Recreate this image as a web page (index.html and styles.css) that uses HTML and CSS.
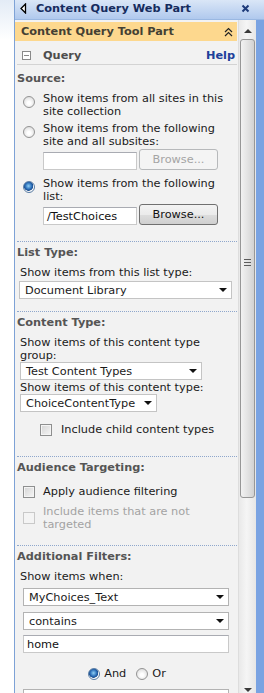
FILE: index.html
```html
<!DOCTYPE html>
<html lang="en">
<head>
    <meta charset="UTF-8">
    <meta name="viewport" content="width=device-width, initial-scale=1.0">
    <title>Content Query Web Part</title>
    <link rel="stylesheet" href="styles.css">
</head>
<body>
<div class="marco">
    <div class="barra-titulo">
        <svg class="flecha" width="7" height="11" viewBox="0 0 7 11">
            <polygon points="5.5,1 1,5.5 5.5,10" fill="#ffffff" stroke="#000000" stroke-width="1.3"/>
        </svg>
        <span class="titulo">Content Query Web Part</span>
        <svg class="cerrar" width="9" height="9" viewBox="0 0 9 9">
            <path d="M1.5 1.5 L7.5 7.5 M7.5 1.5 L1.5 7.5" stroke="#1d3a7a" stroke-width="2"/>
        </svg>
    </div>

    <div class="cuerpo">
        <div class="contenido">
            <div class="cabecera">
                <span>Content Query Tool Part</span>
                <svg width="9" height="10" viewBox="0 0 9 10">
                    <path d="M1 5 L4.5 1.5 L8 5 M1 9 L4.5 5.5 L8 9" fill="none" stroke="#222222" stroke-width="1.2"/>
                </svg>
            </div>

            <div class="fila-query">
                <span class="menos"></span>
                <span class="query">Query</span>
                <a class="ayuda">Help</a>
            </div>

            <!-- Origen -->
            <div class="etiqueta m7">Source:</div>
            <div class="opcion m7">
                <span class="radio"></span>
                <span class="texto">Show items from all sites in this site collection</span>
            </div>
            <div class="opcion m4">
                <span class="radio"></span>
                <span class="texto">Show items from the following site and all subsites:</span>
            </div>
            <div class="fila-examinar">
                <span class="caja"></span>
                <span class="boton deshabilitado">Browse...</span>
            </div>
            <div class="opcion m7">
                <span class="radio marcado"></span>
                <span class="texto">Show items from the following list:</span>
            </div>
            <div class="fila-examinar">
                <span class="caja">/TestChoices</span>
                <span class="boton">Browse...</span>
            </div>

            <!-- Tipo de lista -->
            <div class="seccion sep16">
                <div class="etiqueta m4">List Type:</div>
                <div class="texto-campo m7">Show items from this list type:</div>
                <div class="lista lista-tipo m2"><span>Document Library</span><i class="triangulo"></i></div>
            </div>

            <!-- Tipo de contenido -->
            <div class="seccion sep12">
                <div class="etiqueta m4">Content Type:</div>
                <div class="texto-campo m7">Show items of this content type group:</div>
                <div class="lista lista-grupo"><span>Test Content Types</span><i class="triangulo"></i></div>
                <div class="texto-campo corto m2">Show items of this content type:</div>
                <div class="lista lista-ct"><span>ChoiceContentType</span><i class="triangulo"></i></div>
                <div class="fila-check hijo m11">
                    <span class="check"></span>
                    <span>Include child content types</span>
                </div>
            </div>

            <!-- Audiencia -->
            <div class="seccion sep20">
                <div class="etiqueta m4">Audience Targeting:</div>
                <div class="fila-check m11">
                    <span class="check"></span>
                    <span>Apply audience filtering</span>
                </div>
                <div class="fila-check inactivo m7">
                    <span class="check"></span>
                    <span class="texto">Include items that are not targeted</span>
                </div>
            </div>

            <!-- Filtros -->
            <div class="seccion sep14">
                <div class="etiqueta m4">Additional Filters:</div>
                <div class="texto-campo m7">Show items when:</div>
                <div class="lista lista-filtro m5"><span>MyChoices_Text</span><i class="triangulo"></i></div>
                <div class="lista lista-filtro m6"><span>contains</span><i class="triangulo"></i></div>
                <div class="caja caja-filtro m5">home</div>
                <div class="fila-y-o">
                    <span class="radio marcado"></span>
                    <span class="y">And</span>
                    <span class="radio"></span>
                    <span>Or</span>
                </div>
                <div class="lista lista-filtro m9"><span></span><i class="triangulo"></i></div>
            </div>
        </div>

        <div class="scroll">
            <div class="scroll-arriba"><i class="tri-arriba"></i></div>
            <div class="pulgar"><span class="agarre"></span></div>
            <div class="scroll-resto"></div>
            <div class="scroll-abajo"><i class="triangulo"></i></div>
        </div>
        <div class="borde"></div>
    </div>
</div>
</body>
</html>
```

FILE: styles.css
```css
body {
    margin: 0;
    width: 264px;
    height: 693px;
    overflow: hidden;
    background: linear-gradient(#e3ebf6, #ffffff 40px);
    font-family: "DejaVu Sans", Verdana, sans-serif;
    font-size: 11.3px;
    line-height: 13px;
    color: #1a1a1a;
}

.marco {
    margin-left: 14px;
    height: 693px;
    border-left: 1px solid #7ea2d6;
    display: flex;
    flex-direction: column;
}

/* barra azul de arriba */
.barra-titulo {
    height: 20px;
    box-sizing: border-box;
    padding: 2px 14px 0 5px;
    display: flex;
    align-items: flex-start;
    background: linear-gradient(#dae6f7, #b0c9ed);
    border-bottom: 1px solid #9ab8e2;
    color: #162c5e;
    font-weight: bold;
}
.barra-titulo .flecha {
    margin-top: 1px;
}
.titulo {
    margin-left: 9px;
    flex: 1;
}
.cerrar {
    margin-top: 2px;
}

.cuerpo {
    flex: 1;
    display: flex;
    min-height: 0;
}

.contenido {
    width: 223px;
    background: #f2f2f2;
    padding-top: 2px;
    overflow: hidden;
}

.cabecera {
    height: 19px;
    margin-right: 1px;
    padding: 0 4px 0 6px;
    display: flex;
    align-items: center;
    justify-content: space-between;
    background: #fdd88e;
    color: #444033;
    font-weight: bold;
}

.fila-query {
    margin: 3px 1px 0 2px;
    padding: 5px 2px 2px 5px;
    display: flex;
    align-items: center;
    border-bottom: 1px solid #d3d3d3;
    font-weight: bold;
}
.menos {
    width: 9px;
    height: 9px;
    box-sizing: border-box;
    border: 1px solid #8a8a8a;
    background: linear-gradient(#8a8a8a, #8a8a8a) center / 5px 1px no-repeat, #ffffff;
}
.query {
    margin-left: 12px;
    flex: 1;
    color: #4d4d4d;
}
.ayuda {
    color: #20409a;
}

.etiqueta {
    padding-left: 2px;
    font-weight: bold;
    color: #555555;
}

.texto-campo {
    padding-left: 5px;
    width: 212px;
}
.texto-campo.corto {
    line-height: 12px;
}

.m2 { margin-top: 2px; }
.m4 { margin-top: 4px; }
.m5 { margin-top: 5px; }
.m6 { margin-top: 6px; }
.m7 { margin-top: 7px; }
.m9 { margin-top: 9px; }
.m11 { margin-top: 11px; }

.seccion {
    margin: 0 1px 0 2px;
    border-top: 1px dotted #8fa7cc;
    margin-left: 2px;
}
.seccion .etiqueta { padding-left: 0; }
.seccion .texto-campo { padding-left: 3px; }
.sep12 { margin-top: 12px; }
.sep14 { margin-top: 14px; }
.sep16 { margin-top: 16px; }
.sep20 { margin-top: 20px; }

/* radios y casillas */
.opcion {
    display: flex;
    align-items: flex-start;
    padding-left: 8px;
}
.opcion .radio {
    margin-top: 4px;
}
.opcion .texto {
    margin-left: 8px;
    width: 186px;
}

.radio {
    width: 12px;
    height: 12px;
    flex: none;
    box-sizing: border-box;
    border-radius: 50%;
    border: 1px solid #939393;
    background: radial-gradient(circle at 50% 60%, #ffffff 20%, #d8d8d8 90%);
}
.radio.marcado {
    border-color: #5a7da4;
    background: radial-gradient(circle at 45% 40%, #8fd0f6 0, #2b6db7 40%, #1b4f90 55%, #ffffff 62%, #e4e4e4 90%);
}

.check {
    width: 12px;
    height: 12px;
    flex: none;
    box-sizing: border-box;
    border: 1px solid #8e8f8f;
    background: linear-gradient(135deg, #d4d4d4, #f6f6f6);
    box-shadow: inset 0 0 0 1px #f4f4f4;
}

.fila-check {
    display: flex;
    align-items: center;
    padding-left: 6px;
}
.fila-check .check {
    margin-right: 8px;
}
.fila-check.hijo {
    padding-left: 25px;
    margin-left: -2px;
}
.fila-check.hijo .check {
    margin-right: 9px;
}
.fila-check.inactivo {
    color: #a3a3a3;
}
.fila-check.inactivo .check {
    border-color: #c9c9c9;
    background: #f4f4f4;
}
.fila-check .texto {
    width: 180px;
}

/* cajas de texto y botones */
.fila-examinar {
    margin-top: 1px;
    padding-left: 28px;
    display: flex;
    align-items: flex-end;
}
.caja {
    height: 18px;
    box-sizing: border-box;
    padding: 2px 3px 0;
    background: #ffffff;
    border: 1px solid #c9c9c9;
    border-top-color: #a9abb2;
    color: #111111;
}
.fila-examinar .caja {
    width: 94px;
}
.boton {
    width: 79px;
    height: 21px;
    box-sizing: border-box;
    margin-left: 2px;
    padding-top: 3px;
    text-align: center;
    border: 1px solid #707070;
    border-radius: 3px;
    background: linear-gradient(#f3f3f3, #ebebeb 50%, #dddddd 51%, #cfcfcf);
    color: #111111;
}
.boton.deshabilitado {
    border-color: #b7b9bb;
    background: #f4f4f4;
    color: #a4a4a4;
}

.caja-filtro {
    margin-left: 6px;
    width: 206px;
}

/* listas desplegables */
.lista {
    height: 18px;
    box-sizing: border-box;
    display: flex;
    align-items: center;
    justify-content: space-between;
    padding: 0 4px 0 5px;
    background: #ffffff;
    border: 1px solid #c4c4c4;
}
.lista-tipo {
    width: 213px;
    margin-left: 2px;
}
.lista-grupo {
    width: 182px;
    margin-left: 3px;
}
.lista-ct {
    width: 137px;
    margin-left: 3px;
}
.lista-filtro {
    width: 206px;
    margin-left: 6px;
    border-color: #b3b3b3;
}

.triangulo {
    width: 0;
    height: 0;
    border-left: 4px solid transparent;
    border-right: 4px solid transparent;
    border-top: 4px solid #111111;
}

.fila-y-o {
    margin-top: 14px;
    display: flex;
    align-items: center;
    justify-content: center;
    gap: 4px;
}
.fila-y-o .y {
    margin-right: 6px;
}

/* barra de desplazamiento */
.scroll {
    width: 18px;
    box-sizing: border-box;
    border-left: 1px solid #dddddd;
    display: flex;
    flex-direction: column;
    background: linear-gradient(to right, #e9e9e9, #f5f5f5 45%, #e6e6e6);
}
.scroll-arriba {
    height: 19px;
    display: flex;
    justify-content: center;
    padding-top: 9px;
    box-sizing: border-box;
}
.tri-arriba {
    width: 0;
    height: 0;
    border-left: 4px solid transparent;
    border-right: 4px solid transparent;
    border-bottom: 4px solid #3a3a3a;
}
.pulgar {
    height: 459px;
    margin: 0 1px;
    box-sizing: border-box;
    border: 1px solid #979797;
    border-radius: 3px;
    background: linear-gradient(to right, #f2f2f2, #e3e3e3 50%, #d2d2d2);
    display: flex;
    align-items: center;
    justify-content: center;
}
.agarre {
    width: 7px;
    height: 7px;
    margin-top: -12px;
    background: repeating-linear-gradient(#5c5c5c 0 1px, transparent 1px 3px);
}
.scroll-resto {
    flex: 1;
}
.scroll-abajo {
    height: 10px;
    display: flex;
    justify-content: center;
    padding-top: 5px;
    box-sizing: border-box;
}
.scroll-abajo .triangulo {
    border-top-color: #3a3a3a;
}

.borde {
    width: 8px;
    background: #7aa3e2;
}
```
